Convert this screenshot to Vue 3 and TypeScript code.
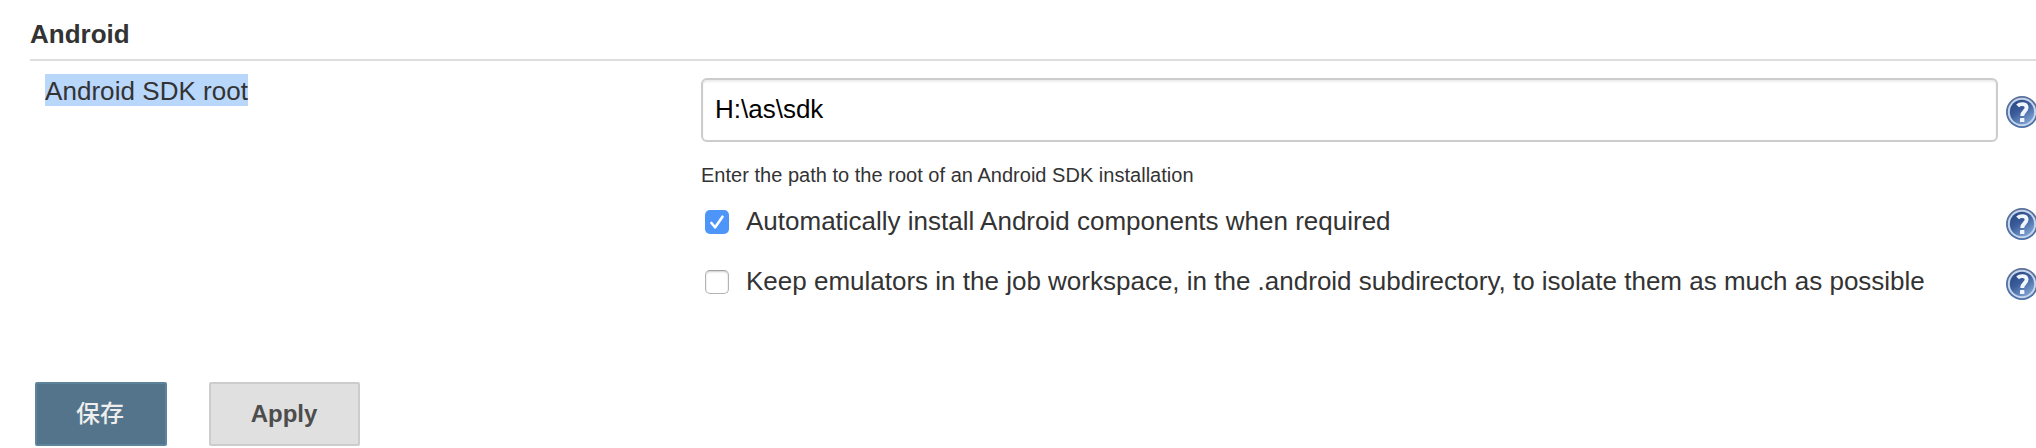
<script setup lang="ts">
import { ref } from 'vue'

interface Option {
  id: string
  label: string
  checked: boolean
}

const sdkRoot = ref<string>('H:\\as\\sdk')
const options = ref<Option[]>([
  { id: 'auto', label: 'Automatically install Android components when required', checked: true },
  {
    id: 'keep',
    label: 'Keep emulators in the job workspace, in the .android subdirectory, to isolate them as much as possible',
    checked: false,
  },
])
</script>

<template>
  <svg class="defs" width="0" height="0" aria-hidden="true">
    <defs>
      <linearGradient id="helpFill" x1="0.1" y1="0" x2="0.8" y2="1">
        <stop offset="0" stop-color="#294781" />
        <stop offset="0.45" stop-color="#3b5d9b" />
        <stop offset="1" stop-color="#86a9d8" />
      </linearGradient>
      <linearGradient id="helpRim" x1="0" y1="0" x2="0" y2="1">
        <stop offset="0" stop-color="#5b7098" />
        <stop offset="1" stop-color="#4a71a8" />
      </linearGradient>
      <symbol id="help" viewBox="0 0 32 32">
        <circle cx="16" cy="16" r="16" fill="url(#helpRim)" />
        <circle cx="16" cy="16" r="14.2" fill="#c6d5ec" />
        <circle cx="16" cy="16" r="12.2" fill="url(#helpFill)" />
        <path d="M11.6 9.9C13.8 7.6 20.6 7 20.6 11.6C20.6 15.2 16.2 15.4 16.2 20" fill="none" stroke="#f1f5fd" stroke-width="3.9" />
        <rect x="14" y="21.9" width="4.4" height="4.2" rx="0.6" fill="#f1f5fd" />
      </symbol>
    </defs>
  </svg>
  <main class="page">
    <h2 class="heading">Android</h2>
    <section class="settings">
      <div class="label"><span class="selected">Android SDK root</span></div>
      <div class="fields">
        <div class="row path-row">
          <input v-model="sdkRoot" class="path" type="text" spellcheck="false" />
          <svg class="help"><use href="#help" /></svg>
        </div>
        <p class="hint">Enter the path to the root of an Android SDK installation</p>
        <div v-for="o in options" :key="o.id" class="row option">
          <label class="choice">
            <input v-model="o.checked" class="native" type="checkbox" />
            <span class="box" :class="{ on: o.checked }">
              <svg v-if="o.checked" viewBox="0 0 24 24" width="24" height="24">
                <path d="M6.4 13L10.2 17.3L17.5 6.7" />
              </svg>
            </span>
            <span class="text">{{ o.label }}</span>
          </label>
          <svg class="help"><use href="#help" /></svg>
        </div>
      </div>
    </section>
    <footer class="actions">
      <button class="btn primary" type="button">保存</button>
      <button class="btn" type="button">Apply</button>
    </footer>
  </main>
</template>

<style>
html,
body {
  background: #fff;
  overflow: hidden;
}
</style>

<style scoped>
.defs {
  position: absolute;
}
.page {
  box-sizing: border-box;
  height: 448px;
  padding-left: 30px;
  overflow: hidden;
  color: #333;
  font-family: "Liberation Sans", "Noto Sans CJK SC", sans-serif;
  font-size: 26px;
  line-height: 30px;
}
.heading {
  box-sizing: border-box;
  height: 61px;
  margin: 0;
  padding-top: 19px;
  border-bottom: 2px solid #ddd;
  font-size: 26px;
  font-weight: bold;
}
.settings {
  display: grid;
  grid-template-columns: 671px 1337px;
  height: 321px;
}
.label {
  padding: 13px 0 0 15px;
}
.selected {
  display: inline-block;
  height: 32px;
  line-height: 34px;
  letter-spacing: 0.05px;
  background: #b9d7fb;
}
.fields {
  padding-top: 17px;
}
.row {
  display: flex;
  align-items: center;
  justify-content: space-between;
}
.path-row {
  height: 64px;
}
.path {
  box-sizing: border-box;
  width: 1297px;
  height: 64px;
  padding: 0 12px 2px;
  border: 2px solid #ccc;
  border-radius: 6px;
  outline: none;
  background: #fff;
  box-shadow: inset 0 2px 2px rgba(0, 0, 0, 0.075);
  color: #000;
  font: inherit;
}
.help {
  flex: none;
  width: 32px;
  height: 32px;
  margin-top: 4px;
}
.hint {
  box-sizing: border-box;
  height: 50px;
  margin: 0;
  padding-top: 18px;
  font-size: 20px;
  letter-spacing: 0.02px;
  line-height: 30px;
}
.option {
  height: 60px;
}
.choice {
  display: flex;
  align-items: center;
  padding-left: 4px;
}
.native {
  position: absolute;
  opacity: 0;
  pointer-events: none;
}
.box {
  box-sizing: border-box;
  width: 24px;
  height: 24px;
  border: 1px solid #b3b3b3;
  border-top-color: #a2a2a2;
  border-radius: 5px;
  background: #fff;
  box-shadow: inset 0 1px 2px rgba(0, 0, 0, 0.2);
}
.box.on {
  border: 0;
  background: #4d95f8;
  box-shadow: none;
}
.box svg {
  display: block;
  fill: none;
  stroke: #fff;
  stroke-width: 2.6;
  stroke-linecap: round;
  stroke-linejoin: round;
}
.text {
  margin-left: 17px;
  padding-bottom: 2px;
  white-space: nowrap;
}
.actions {
  display: flex;
  gap: 42px;
  padding-left: 5px;
}
.btn {
  box-sizing: border-box;
  width: 151px;
  height: 64px;
  padding: 0 1px 0 0;
  border: 2px solid #ccc;
  border-radius: 2px;
  background: #e0e0e0;
  color: #4d4d4d;
  font: bold 24px/30px "Liberation Sans", "Noto Sans CJK SC", sans-serif;
}
.primary {
  width: 132px;
  padding-right: 2px;
  border-color: #5c859d;
  background: #53748a;
  color: #eee;
  font-weight: 500;
}
</style>
